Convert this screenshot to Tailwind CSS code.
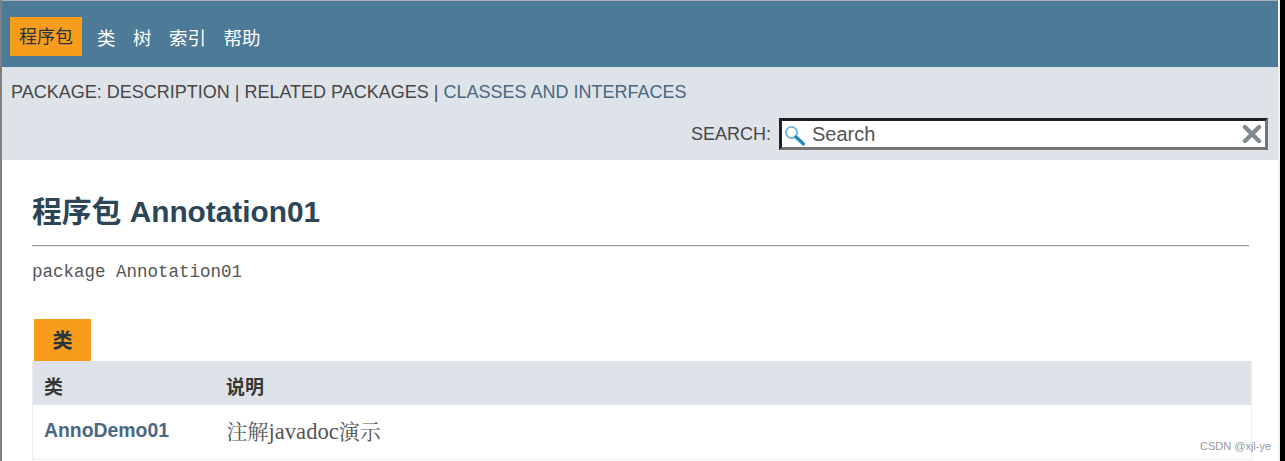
<!DOCTYPE html>
<html lang="en">
  <head>
    <meta charset="UTF-8" />
    <title>Annotation01</title>
    <script src="https://cdn.jsdelivr.net/npm/@tailwindcss/browser@4"></script>
  </head>
  <body class="bg-white font-['Liberation_Sans','Noto_Sans_CJK_SC',sans-serif] overflow-hidden">
    <div class="relative w-[1285px] h-[461px] flex overflow-hidden">
      <div class="w-[2px] bg-[#808080]"></div>
      <div class="w-[1276px] flex flex-col">
        <div class="h-[1px] bg-[#b0b0b0]"></div>

        <!-- Top nav -->
        <div class="h-[66px] bg-[#4d7a97] flex items-start pt-[16px] pl-2 text-white text-[18.5px]">
          <div class="w-[72px] h-[39px] pt-[2px] bg-[#f89c1c] text-[#253441] text-[18px] flex items-center justify-center">程序包</div>
          <div class="h-[39px] pt-[4px] flex items-center gap-[17.5px] ml-[15px]">
            <span>类</span>
            <span>树</span>
            <span>索引</span>
            <span>帮助</span>
          </div>
        </div>

        <!-- Sub nav -->
        <div class="h-[93px] bg-[#dee3e9] text-[#474747] text-[18px] flex flex-col">
          <div class="pl-[9px] pt-[14px] leading-[22px]">
            PACKAGE: DESCRIPTION | RELATED PACKAGES | <span class="text-[#4a6782]">CLASSES AND INTERFACES</span>
          </div>
          <div class="flex justify-end items-center mt-[15px] pr-[10px]">
            <span class="mr-[8px] text-[#474747]">SEARCH:</span>
            <div class="relative w-[489px] h-[32px] bg-white border-[3px] border-t-[#1f1f1f] border-l-[#1f1f1f] border-r-[#767676] border-b-[#767676] flex items-center pl-[30px] text-[20px] text-[#555555]">
              <span>Search</span>
              <svg class="absolute left-[2px] top-[2px]" width="24" height="24" viewBox="0 0 24 24" fill="none">
                <circle cx="7.5" cy="9.5" r="5.6" stroke="#6fb3dc" stroke-width="1.8" />
                <path d="M12 14 L19.5 21" stroke="#1f87c4" stroke-width="3.2" stroke-linecap="round" />
              </svg>
              <svg class="absolute right-[3px] top-[3px]" width="20" height="20" viewBox="0 0 20 20" fill="none">
                <path d="M3 3 L17 17 M17 3 L3 17" stroke="#808a91" stroke-width="4.4" stroke-linecap="round" />
              </svg>
            </div>
          </div>
        </div>

        <!-- Content -->
        <div class="pl-[30px] flex-1">
          <h1 class="mt-[32px] text-[#2c4557] text-[29.8px] font-bold leading-[40px]">程序包 Annotation01</h1>
          <div class="mt-[13px] w-[1217px] border-t border-b border-t-[#999999] border-b-[#e4e4e4] h-[2px]"></div>
          <div class="mt-[13px] font-['Liberation_Mono','DejaVu_Sans_Mono',monospace] text-[#555555] text-[17.5px] leading-[24px]">package Annotation01</div>

          <div class="mt-[35px] ml-[2px] w-[57px] h-[42px] pt-[2px] bg-[#f89c1c] text-[#253441] font-bold text-[20px] flex items-center justify-center">类</div>
          <div class="w-[1220px] h-[99px] border-x border-b border-[#eeeeee]">
            <div class="h-[44px] pt-[10px] bg-[#dee3e9] flex items-center text-[#353833] font-bold text-[19px]">
              <div class="w-[193px] pl-[11px]">类</div>
              <div>说明</div>
            </div>
            <div class="flex items-center h-[54px]">
              <div class="w-[193px] pl-[11px] pb-[2px] text-[#4a6782] font-bold text-[19.4px]">AnnoDemo01</div>
              <div class="ml-[0.5px] font-['Liberation_Serif','Noto_Serif_CJK_SC','Noto_Sans_CJK_SC',serif] text-[#555555] text-[21px]">注解<span class="text-[22.6px]">javadoc</span>演示</div>
            </div>
          </div>
        </div>
      </div>
      <div class="w-[2px] bg-[#f0f0f0]"></div>
      <div class="w-[5px] bg-black"></div>

      <!-- Watermark -->
      <div class="absolute left-[1200px] top-[438px] text-[11px] text-[#999999]">CSDN @xjl-ye</div>
    </div>
  </body>
</html>
